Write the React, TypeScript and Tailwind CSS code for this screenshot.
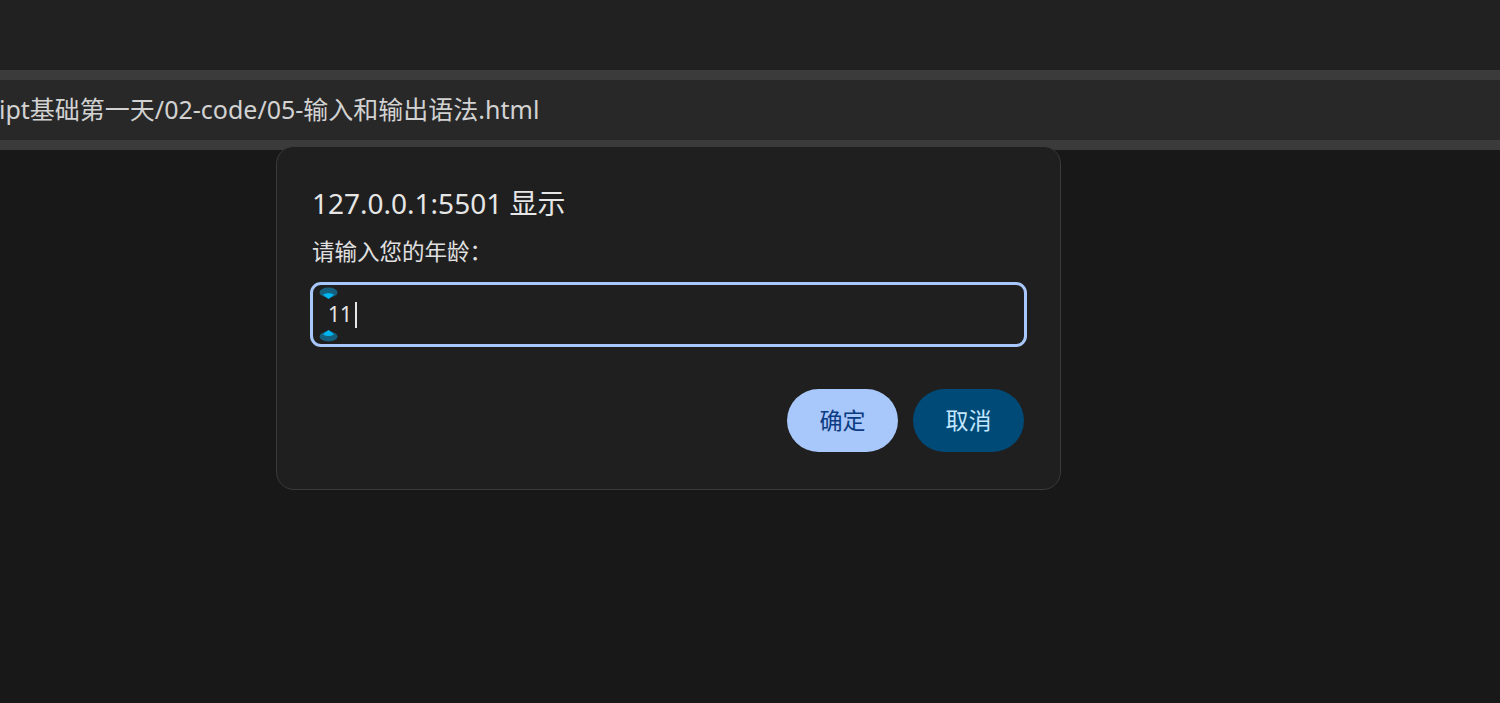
import React from "react";

const font = { fontFamily: '"Noto Sans", "Noto Sans CJK SC", sans-serif' };

function SpinMarker({ flip }: { flip?: boolean }) {
  return (
    <svg width="19" height="13" viewBox="0 0 19 13" className={flip ? "rotate-180" : ""}>
      <ellipse cx="9.5" cy="5.5" rx="9" ry="5" fill="#16607f" />
      <path d="M4 7.5 Q9.5 4.5 15 7.5 Q12 11 9.5 12 Q7 11 4 7.5 Z" fill="#00b4f0" />
    </svg>
  );
}

export default function App() {
  return (
    <div className="relative w-[1500px] h-[703px] bg-[#181818] overflow-hidden flex flex-col" style={font}>
      <div className="h-[70px] bg-[#202120]" />
      <div className="h-[10px] bg-[#3b3b3b]" />
      <div className="h-[60px] bg-[#282828] flex items-center">
        <span className="text-[25px] text-[#d2d2d2] whitespace-nowrap -ml-[1px]">ipt基础第一天/02-code/05-输入和输出语法.html</span>
      </div>
      <div className="h-[10px] bg-[#3b3b3b]" />
      <div className="flex-1" />

      <div className="absolute left-[276px] top-[146px] w-[785px] h-[344px] rounded-[18px] border border-[#3a3a3a] bg-[#1f1f1f] px-[35px] pt-[37px] flex flex-col">
        <div className="text-[28px] leading-[38px] text-[#e6e6e6]">127.0.0.1:5501 显示</div>
        <div className="mt-[14px] text-[22.5px] leading-[32px] text-[#e0e0e0]">请输入您的年龄：</div>
        <div className="relative mt-[14px] -ml-[2px] h-[65px] w-[717px] rounded-[11px] border-[3px] border-[#a8c7fa] flex items-center pl-[15px]">
          <div className="absolute left-[6px] top-[2px]"><SpinMarker /></div>
          <div className="absolute left-[6px] bottom-[2px]"><SpinMarker flip /></div>
          <span className="text-[21px] text-[#e6e6e6]">11</span>
          <span className="ml-[3px] w-[2px] h-[26px] bg-[#e6e6e6]" />
        </div>
        <div className="mt-[42px] flex justify-end gap-[15px] pr-[1px]">
          <button className="h-[63px] w-[111px] rounded-full bg-[#a8c7fa] text-[#0b3b82] text-[23px]">确定</button>
          <button className="h-[63px] w-[111px] rounded-full bg-[#004a77] text-[#c2e7ff] text-[23px]">取消</button>
        </div>
      </div>
    </div>
  );
}
